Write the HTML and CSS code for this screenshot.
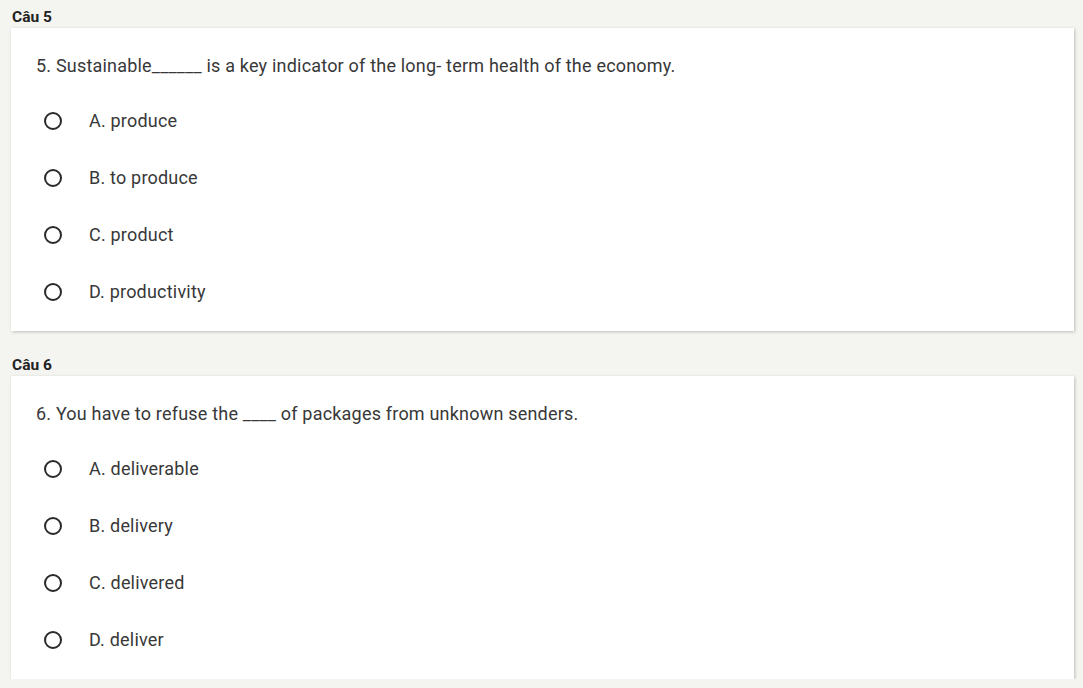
FILE: index.html
```html
<!DOCTYPE html>
<html lang="vi">
<head>
<meta charset="utf-8">
<title>Quiz</title>
<link rel="stylesheet" href="styles.css">
</head>
<body>
<div class="page">
  <section class="question">
    <div class="q-label">Câu 5</div>
    <div class="card">
      <div class="q-text">5. Sustainable______ is a key indicator of the long- term health of the economy.</div>
      <ul class="options">
        <li class="option"><span class="radio"></span><span class="opt-text">A. produce</span></li>
        <li class="option"><span class="radio"></span><span class="opt-text">B. to produce</span></li>
        <li class="option"><span class="radio"></span><span class="opt-text">C. product</span></li>
        <li class="option"><span class="radio"></span><span class="opt-text">D. productivity</span></li>
      </ul>
    </div>
  </section>
  <section class="question">
    <div class="q-label">Câu 6</div>
    <div class="card">
      <div class="q-text">6. You have to refuse the ____ of packages from unknown senders.</div>
      <ul class="options">
        <li class="option"><span class="radio"></span><span class="opt-text">A. deliverable</span></li>
        <li class="option"><span class="radio"></span><span class="opt-text">B. delivery</span></li>
        <li class="option"><span class="radio"></span><span class="opt-text">C. delivered</span></li>
        <li class="option"><span class="radio"></span><span class="opt-text">D. deliver</span></li>
      </ul>
    </div>
  </section>
</div>
</body>
</html>
```
FILE: styles.css
```css
html, body {
  margin: 0;
  padding: 0;
  background: #f4f4f0;
  font-family: Roboto, "Liberation Sans", Arial, sans-serif;
  color: #333;
}
.page {
  padding: 7px 9px 0 11px;
  display: flex;
  flex-direction: column;
  gap: 24px;
}
.q-label {
  font-size: 15.5px;
  font-weight: 700;
  line-height: 20px;
  color: #222;
  padding-left: 1px;
  margin-bottom: 1px;
}
.card {
  background: #fff;
  box-shadow: 1px 1px 3px rgba(0,0,0,0.22);
  padding: 26px 24px 27px 25px;
}
.q-text {
  font-size: 18px;
  letter-spacing: 0.2px;
  line-height: 24px;
  color: #383838;
}
.options {
  list-style: none;
  margin: 31px 0 0 0;
  padding: 0;
  display: flex;
  flex-direction: column;
  gap: 33px;
}
.option {
  display: flex;
  align-items: center;
  height: 24px;
}
.radio {
  box-sizing: border-box;
  width: 18px;
  height: 18px;
  border: 2px solid #2a2a2a;
  border-radius: 50%;
  margin-left: 8px;
  margin-right: 27px;
  flex: none;
}
.opt-text {
  font-size: 18px;
  letter-spacing: 0.2px;
  line-height: 24px;
  color: #383838;
}
```
